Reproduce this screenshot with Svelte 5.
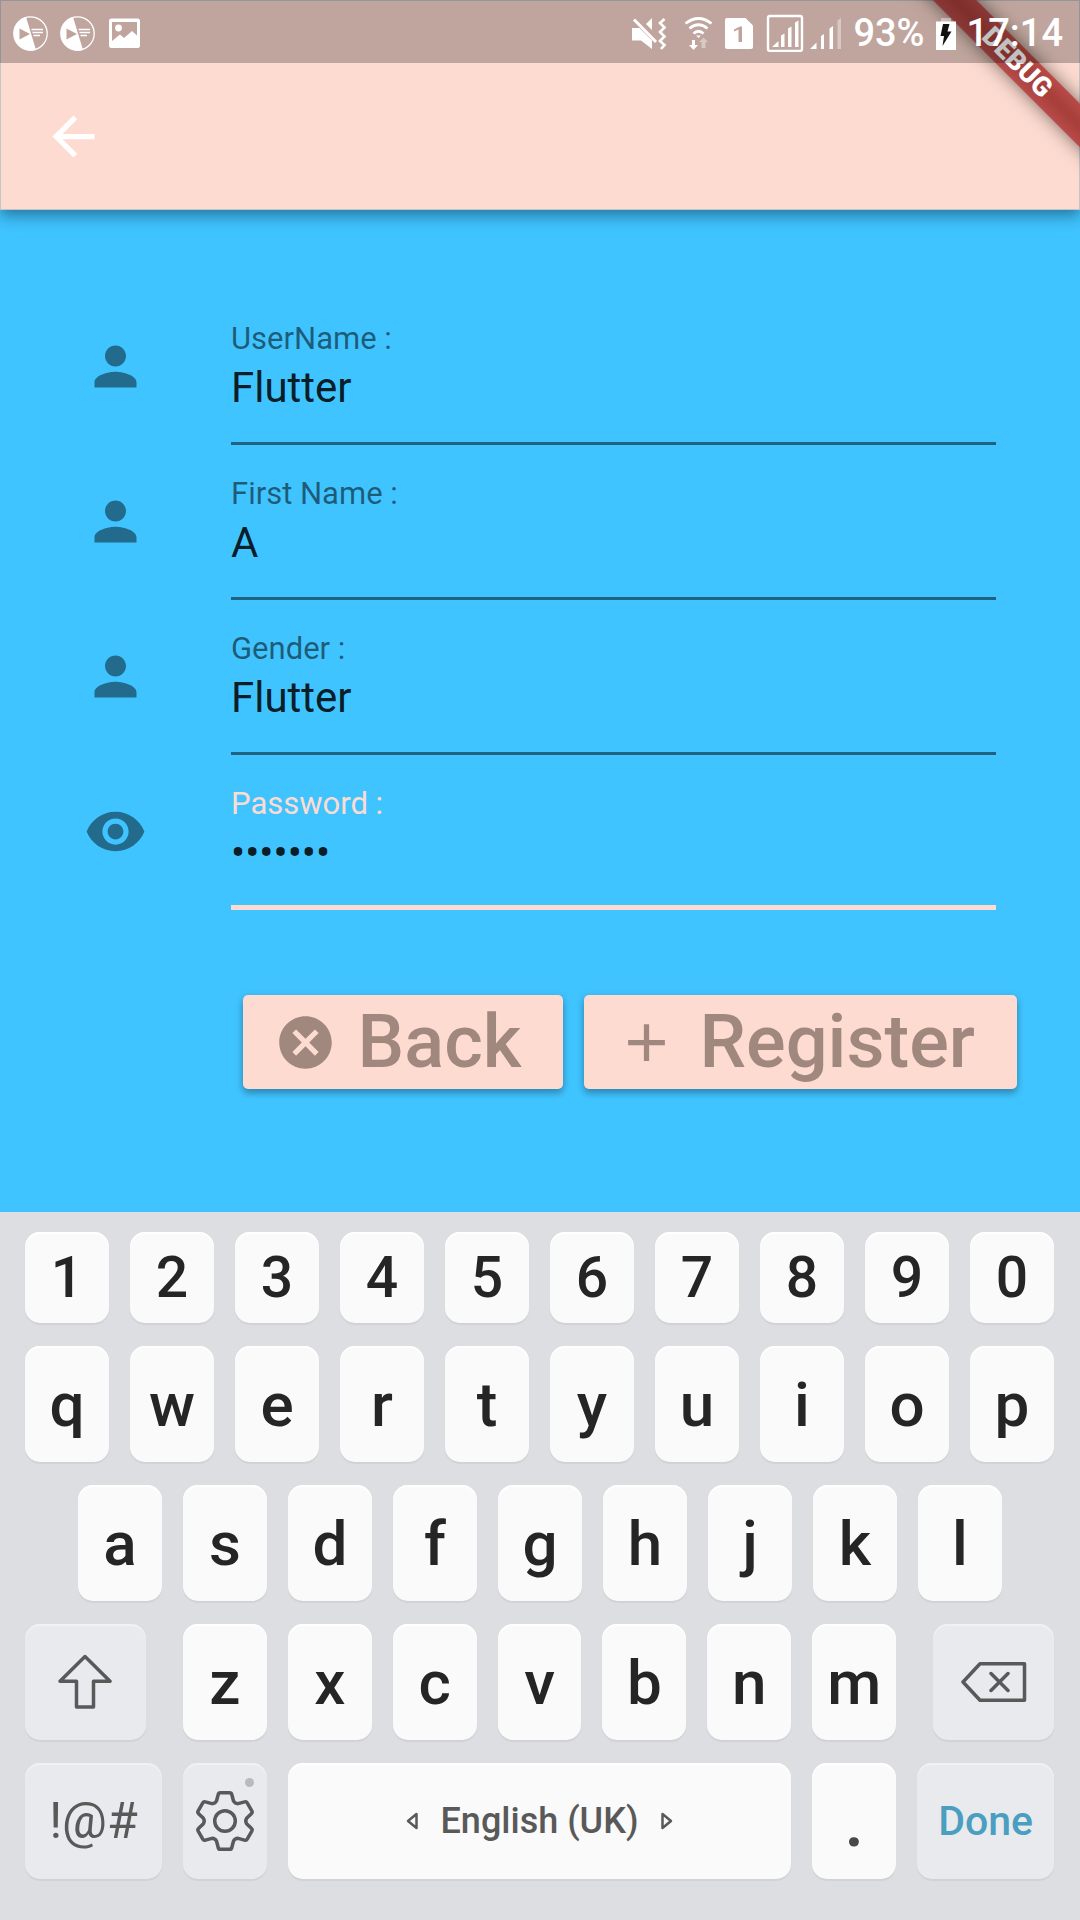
<script>
  const person = 'M12 12c2.21 0 4-1.79 4-4s-1.79-4-4-4-4 1.79-4 4 1.79 4 4 4zm0 2c-2.67 0-8 1.34-8 4v2h16v-2c0-2.66-5.33-4-8-4z';
  const eye = 'M12 4.5C7 4.5 2.73 7.61 1 12c1.73 4.39 6 7.5 11 7.5s9.27-3.11 11-7.5c-1.73-4.39-6-7.5-11-7.5zM12 17c-2.76 0-5-2.24-5-5s2.24-5 5-5 5 2.24 5 5-2.24 5-5 5zm0-8c-1.66 0-3 1.34-3 3s1.34 3 3 3 3-1.34 3-3-1.34-3-3-3z';

  let fields = $state([
    { id: 'username', label: 'UserName :', type: 'text', value: 'Flutter', icon: person },
    { id: 'firstname', label: 'First Name :', type: 'text', value: 'A', icon: person },
    { id: 'gender', label: 'Gender :', type: 'text', value: 'Flutter', icon: person },
    { id: 'password', label: 'Password :', type: 'password', value: 'flutter', icon: eye, active: true }
  ]);

  const digits = [...'1234567890'];
  const topLetters = [...'qwertyuiop'];
  const midLetters = [...'asdfghjkl'];
  const lowLetters = [...'zxcvbnm'];

  // Six-toothed gear outline around the origin
  function gearPath() {
    const at = (x, y, deg) => {
      const a = (deg * Math.PI) / 180;
      const px = x * Math.cos(a) - y * Math.sin(a);
      const py = x * Math.sin(a) + y * Math.cos(a);
      return `${px.toFixed(2)} ${py.toFixed(2)}`;
    };
    let d = '';
    for (let t = 0; t < 6; t++) {
      const r = t * 60;
      d += `${t ? 'L' : 'M'}${at(-8.5, -20, r)} L${at(-6.8, -26.5, r)} Q${at(-6.4, -28.3, r)} ${at(-4.6, -28.3, r)} `;
      d += `L${at(4.6, -28.3, r)} Q${at(6.4, -28.3, r)} ${at(6.8, -26.5, r)} L${at(8.5, -20, r)} `;
      d += `Q${at(10, -17.3, r)} ${at(-8.5, -20, r + 60)} `;
    }
    return d + 'Z';
  }
  const gear = gearPath();
</script>

{#snippet disc()}
  <svg class="status-icon" width="37" height="38" viewBox="12 13 37 38" aria-hidden="true">
    <circle cx="30.5" cy="32.5" r="16.7" fill="none" stroke="#fff" stroke-width="1.3" />
    <path d="M26 16A17 17 0 0 0 36 49Z" fill="#fff" />
    <path d="M19.5 27.5L30 33 19.500 38.500Z" fill="#bfa49c" />
    <path d="M31.5 28.500H43M32.500 31.500H43M33.500 34.500H40" stroke="#fff" stroke-width="1.5" />
  </svg>
{/snippet}

<div class="screen">
  <header>
    <div class="corner" aria-hidden="true"><div class="ribbon">DEBUG</div></div>

    <div class="status">
      {@render disc()}
      {@render disc()}
      <svg class="status-icon" width="37" height="38" viewBox="106 13 37 38" aria-hidden="true">
        <path fill="#fff" fill-rule="evenodd" d="M111.500 17.500h26a2.500 2.500 0 0 1 2.500 2.500v24.500a2.500 2.500 0 0 1-2.500 2.500h-26a2.500 2.500 0 0 1-2.500-2.500V20a2.500 2.500 0 0 1 2.500-2.500zM112 21v19l8-6.500 4 3.500 8-7 5 4.500V21z" />
        <circle cx="118.500" cy="27" r="3.400" fill="#fff" />
      </svg>
      <span class="spacer"></span>
      <svg class="status-icon" width="43" height="38" viewBox="629 13 43 38" aria-hidden="true">
        <path fill="#fff" d="M631 27h7.500L651 39.500V48l-11-8.500h-9zM645 23l6-6v12z" />
        <path d="M633 18.500 L655 41" stroke="#fff" stroke-width="3" />
        <path d="M663.500 18l-4.500 4 4.500 4.500-4.500 4.500 4.500 4.500-4.500 4.500 4.500 4-3.500 4" fill="none" stroke="#fff" stroke-width="2.600" />
      </svg>
      <svg class="status-icon" width="31" height="38" viewBox="683 13 31 38" aria-hidden="true">
        <g fill="none" stroke="#fff" stroke-width="2.800">
          <path d="M685.500 22.500Q698.500 12.500 711.500 22.500" />
          <path d="M689.500 27.500Q698.500 20 707.500 27.500" />
          <path d="M693.500 32.500Q698.500 28 703.500 32.500" />
        </g>
        <path fill="#fff" d="M696 34.500h5l-2.500 2.500zM692 39h3v5h3l-4.500 5-4.500-5h3z" />
        <path fill="#fff" opacity=".4" d="M703.500 36.500l4.500 4.500h-2.500v6h-4v-6H699z" />
      </svg>
      <svg class="status-icon" width="30" height="38" viewBox="723 13 30 38" aria-hidden="true">
        <path fill="#fff" d="M726 17h18.500l7.500 7.500V46a2 2 0 0 1-2 2h-24a2 2 0 0 1-2-2V19a2 2 0 0 1 2-2z" />
        <path fill="#bfa49c" d="M733 28.500l6-3h2V41h-3.500V28.500L733 30.500z" />
      </svg>
      <svg class="status-icon" width="79" height="38" viewBox="763 13 79 38" aria-hidden="true">
        <rect x="767" y="15" width="34" height="35" rx="2" fill="none" stroke="#fff" stroke-width="2.400" />
        <path fill="#fff" d="M771 46l6.500-6v6zM780 34.500l3.500-2V46H780zM787 27.500l3.500-2V46H787zM794 21.500l3.500-2V46H794z" />
        <path fill="#fff" d="M809 48l6.500-6.500V48zM820 35l3-2v15h-3zM828.500 27.500l3.500-2.500v23h-3.500z" />
        <path fill="#fff" opacity=".4" d="M836.500 19.500l3.500-2.500v31h-3.500z" />
      </svg>
      <span>93%</span>
      <svg class="status-icon" width="22" height="38" viewBox="932 13 22 38" aria-hidden="true">
        <rect x="938" y="17" width="10" height="4" fill="#fff" opacity=".4" />
        <rect x="933" y="20.500" width="20" height="28.500" fill="#fff" />
        <path fill="#111" d="M940 23h6.500l-2 7.500h4L939.500 45l1.500-10h-3.500z" />
      </svg>
      <time>17:14</time>
    </div>

    <nav>
      <button class="nav-back" aria-label="Back">
        <svg width="63" height="63" viewBox="0 0 24 24" fill="currentColor"><path d="M20 11H7.830l5.590-5.590L12 4l-8 8 8 8 1.410-1.410L7.830 13H20v-2z" /></svg>
      </button>
    </nav>
  </header>

  <form onsubmit={(e) => e.preventDefault()}>
    {#each fields as field (field.id)}
      <div class="row">
        <svg class="row-icon" width="63" height="63" viewBox="0 0 24 24" aria-hidden="true"><path d={field.icon} /></svg>
        <div class="field" class:active={field.active}>
          <label for={field.id}>{field.label}</label>
          <input id={field.id} type={field.type} bind:value={field.value} autocomplete="off" />
        </div>
      </div>
    {/each}

    <div class="actions">
      <button type="button" class="raised">
        <svg width="63" height="63" viewBox="0 0 24 24" fill="currentColor" aria-hidden="true"><path d="M12 2C6.470 2 2 6.470 2 12s4.470 10 10 10 10-4.470 10-10S17.530 2 12 2zm5 13.590L15.590 17 12 13.410 8.410 17 7 15.590 10.590 12 7 8.410 8.410 7 12 10.590 15.590 7 17 8.410 13.410 12 17 15.590z" /></svg>
        <span>Back</span>
      </button>
      <button type="submit" class="raised">
        <svg width="63" height="63" viewBox="0 0 24 24" fill="currentColor" aria-hidden="true"><path d="M19 13h-6v6h-2v-6H5v-2h6V5h2v6h6v2z" /></svg>
        <span>Register</span>
      </button>
    </div>
  </form>

  <section class="keyboard" aria-label="Keyboard">
    <div class="keys numbers">
      {#each digits as k}<button class="key">{k}</button>{/each}
    </div>
    <div class="keys">
      {#each topLetters as k}<button class="key">{k}</button>{/each}
    </div>
    <div class="keys middle">
      {#each midLetters as k}<button class="key">{k}</button>{/each}
    </div>
    <div class="keys">
      <button class="key side shift" aria-label="Shift">
        <svg width="54" height="56" viewBox="-27 -28 54 56"><path d="M0-25.500 25-.8H8.500V25h-17V-.8H-25z" /></svg>
      </button>
      {#each lowLetters as k}<button class="key">{k}</button>{/each}
      <button class="key side erase" aria-label="Backspace">
        <svg width="66" height="42" viewBox="-33 -21 66 42"><path d="M-31 0-14-18.300H30.500V18.300H-14zM-3-8.500 14 8.500M14-8.500-3 8.500" /></svg>
      </button>
    </div>
    <div class="keys">
      <button class="key side wide symbols">!@#</button>
      <button class="key side settings" aria-label="Settings">
        <svg width="62" height="62" viewBox="-31 -31 62 62"><path d={gear} /><circle r="10.300" /></svg>
        <i class="dot"></i>
      </button>
      <button class="key space">
        <svg width="12" height="18" viewBox="0 0 12 18"><path d="M10.500 2v14L2 9z" /></svg>
        English (UK)
        <svg width="12" height="18" viewBox="0 0 12 18"><path d="M1.500 2v14L10 9z" /></svg>
      </button>
      <button class="key period">.</button>
      <button class="key side wide done">Done</button>
    </div>
  </section>
</div>

<style>
  :global(body) {
    margin: 0;
  }

  .screen {
    display: flex;
    flex-direction: column;
    min-height: 100vh;
    background: #40c4ff;
    font-family: Roboto, 'Liberation Sans', sans-serif;
  }

  button {
    border: 0;
    padding: 0;
    font: inherit;
    cursor: pointer;
  }

  svg {
    display: block;
    flex: none;
  }

  header {
    position: relative;
    background: #fddbd0;
    box-shadow:
      inset 0 0 0 1px rgba(64, 150, 180, 0.3),
      0 5px 10px -2px rgba(0, 0, 0, 0.2),
      0 9px 13px rgba(0, 0, 0, 0.14),
      0 3px 22px rgba(0, 0, 0, 0.12);
  }

  .status {
    position: relative;
    z-index: 2;
    box-sizing: border-box;
    display: flex;
    align-items: center;
    gap: 10px;
    height: 63px;
    padding: 2px 17px 0 12px;
    background: rgba(0, 0, 0, 0.245);
    color: #fff;
    font-size: 38px;
    font-weight: 500;
    line-height: 60px;
  }

  .spacer {
    flex: 1;
  }

  .corner {
    position: absolute;
    z-index: 1;
    top: 0;
    right: 0;
    width: 210px;
    height: 210px;
    overflow: hidden;
  }

  .ribbon {
    position: absolute;
    top: 47px;
    right: -87px;
    width: 300px;
    height: 31px;
    transform: rotate(45deg);
    background: linear-gradient(#b84b49, #a83f3b 45%, #a83f3b 55%, #b84b49);
    box-shadow: 0 0 18px rgba(0, 0, 0, 0.5);
    color: #fff;
    font-size: 27px;
    font-weight: 900;
    line-height: 31px;
    text-align: center;
  }

  nav {
    display: flex;
    align-items: center;
    height: 147px;
    padding: 0 42px;
  }

  .nav-back {
    background: none;
    color: #fff;
  }

  form {
    flex: 1;
    padding: 80px 84px;
  }

  .row {
    display: flex;
    align-items: center;
    gap: 84px;
  }

  .row-icon {
    margin-bottom: 3px;
    fill: rgba(0, 0, 0, 0.45);
  }

  .field {
    flex: 1;
    min-width: 0;
    display: flex;
    flex-direction: column;
    gap: 5px;
    padding: 30px 0 29px;
    border-bottom: 3px solid #206280;
  }

  .field.active {
    padding-bottom: 27px;
    border-bottom: 5px solid #fddbd0;
  }

  label {
    color: rgba(0, 0, 0, 0.54);
    font-size: 31px;
    line-height: 38px;
  }

  .active label {
    color: #fddbd0;
  }

  input {
    height: 50px;
    border: 0;
    padding: 0;
    outline: 0;
    background: none;
    color: rgba(0, 0, 0, 0.87);
    font-family: inherit;
    font-size: 42px;
    line-height: 50px;
  }

  .actions {
    display: flex;
    justify-content: flex-end;
    gap: 21px;
    margin: 85px -21px 0 0;
  }

  .raised {
    display: flex;
    align-items: center;
    gap: 21px;
    height: 94px;
    padding: 0 42px 0 31px;
    border-radius: 5px;
    background: #fddbd0;
    box-shadow:
      0 5px 6px rgba(0, 0, 0, 0.18),
      0 2px 8px rgba(0, 0, 0, 0.18);
    color: #a1887f;
    font-size: 74px;
    font-weight: 500;
    line-height: 88px;
  }

  .keyboard {
    display: flex;
    flex-direction: column;
    gap: 23px;
    padding: 20px 26px 41px 25px;
    background: #dddee2;
  }

  .keys {
    display: flex;
    gap: 21px;
    height: 116px;
    font-size: 62px;
    font-weight: 500;
  }

  .numbers {
    height: 91px;
    font-size: 57px;
  }

  .middle {
    padding: 0 52px 0 53px;
  }

  .key {
    flex: 84 1 0;
    min-width: 0;
    display: flex;
    align-items: center;
    justify-content: center;
    border-radius: 15px;
    background: #fafafa;
    box-shadow:
      inset 0 2px 0 #fff,
      0 2px 1px #d1d2d6;
    color: #252525;
  }

  .side {
    background: #e9eaee;
    box-shadow:
      inset 0 2px 0 #f0f1f4,
      0 2px 1px #d1d2d6;
    color: #595959;
  }

  .key svg {
    fill: none;
    stroke: #595959;
    stroke-width: 3.5px;
    stroke-linejoin: round;
    stroke-linecap: round;
  }

  .shift,
  .erase {
    flex-grow: 121;
  }

  .shift {
    margin-right: 16px;
  }

  .erase {
    margin-left: 16px;
  }

  .wide {
    flex-grow: 137;
  }

  .symbols {
    font-size: 50px;
    font-weight: 400;
  }

  .settings {
    position: relative;
  }

  .dot {
    position: absolute;
    top: 15px;
    right: 13px;
    width: 9px;
    height: 9px;
    border-radius: 50%;
    background: #b9babc;
  }

  .space {
    flex-grow: 504;
    gap: 23px;
    color: #595959;
    font-size: 36px;
  }

  .space svg {
    stroke-width: 2.5px;
  }

  .period {
    color: #484848;
    font-size: 72px;
  }

  .done {
    color: #4a9fc0;
    font-size: 41px;
  }
</style>
